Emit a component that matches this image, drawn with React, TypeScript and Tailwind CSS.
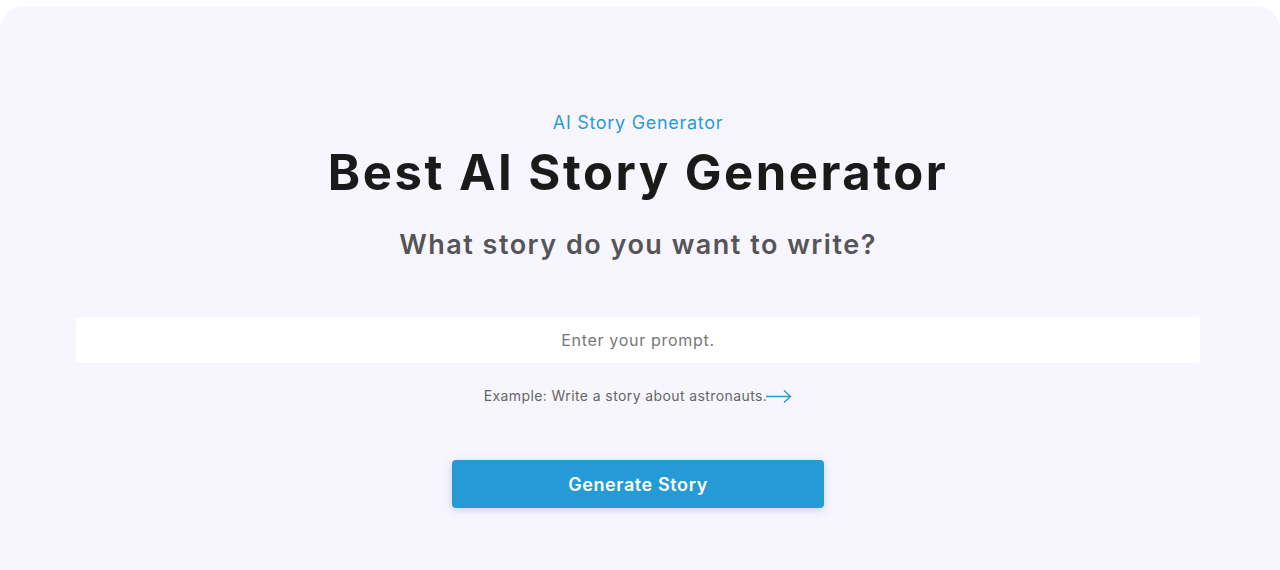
import React from "react";

const App = () => {
  return (
    <div className="min-h-[570px] bg-white pt-[6px] font-['Inter',sans-serif]">
      <section className="min-h-[564px] rounded-t-[24px] bg-[#f7f6fe] pl-[76px] pr-[80px] pt-[100px]">
        <div className="flex flex-col items-center text-center">
          <div className="mt-[1px] text-[18px] leading-[32px] tracking-[0.7px] text-[#2a9ad6]">AI Story Generator</div>
          <h1 className="mt-[4px] text-[49px] font-bold leading-[60px] tracking-[2.5px] text-[#1a1a1a]">
            Best AI Story Generator
          </h1>
          <h2 className="mt-[24px] text-[27px] font-semibold leading-[36px] tracking-[1.5px] text-[#555459]">
            What story do you want to write?
          </h2>
        </div>
        <input
          type="text"
          placeholder="Enter your prompt."
          className="mt-[54px] block h-[46px] w-full rounded-[4px] bg-white text-center text-[16px] tracking-[0.7px] text-[#333] outline-none placeholder:text-[#777]"
        />
        <div className="mt-[22px] flex items-center justify-center text-[14px] tracking-[0.4px] text-[#666]">
          <span>Example: Write a story about astronauts.</span>
          <svg width="26" height="14" viewBox="0 0 26 14" fill="none" className="-ml-[1px]">
            <path d="M0 7.5H24M18 1.5L24.5 7.5L18 13.5" stroke="#2a9ad6" strokeWidth="1.4" />
          </svg>
        </div>
        <div className="mt-[54px] flex justify-center">
          <button className="h-[48px] w-[372px] rounded-[4px] bg-[#249bd7] text-[18px] font-semibold tracking-[0.6px] text-white shadow-[0_2px_8px_rgba(90,90,200,0.25)]">
            Generate Story
          </button>
        </div>
      </section>
    </div>
  );
};

export default App;
